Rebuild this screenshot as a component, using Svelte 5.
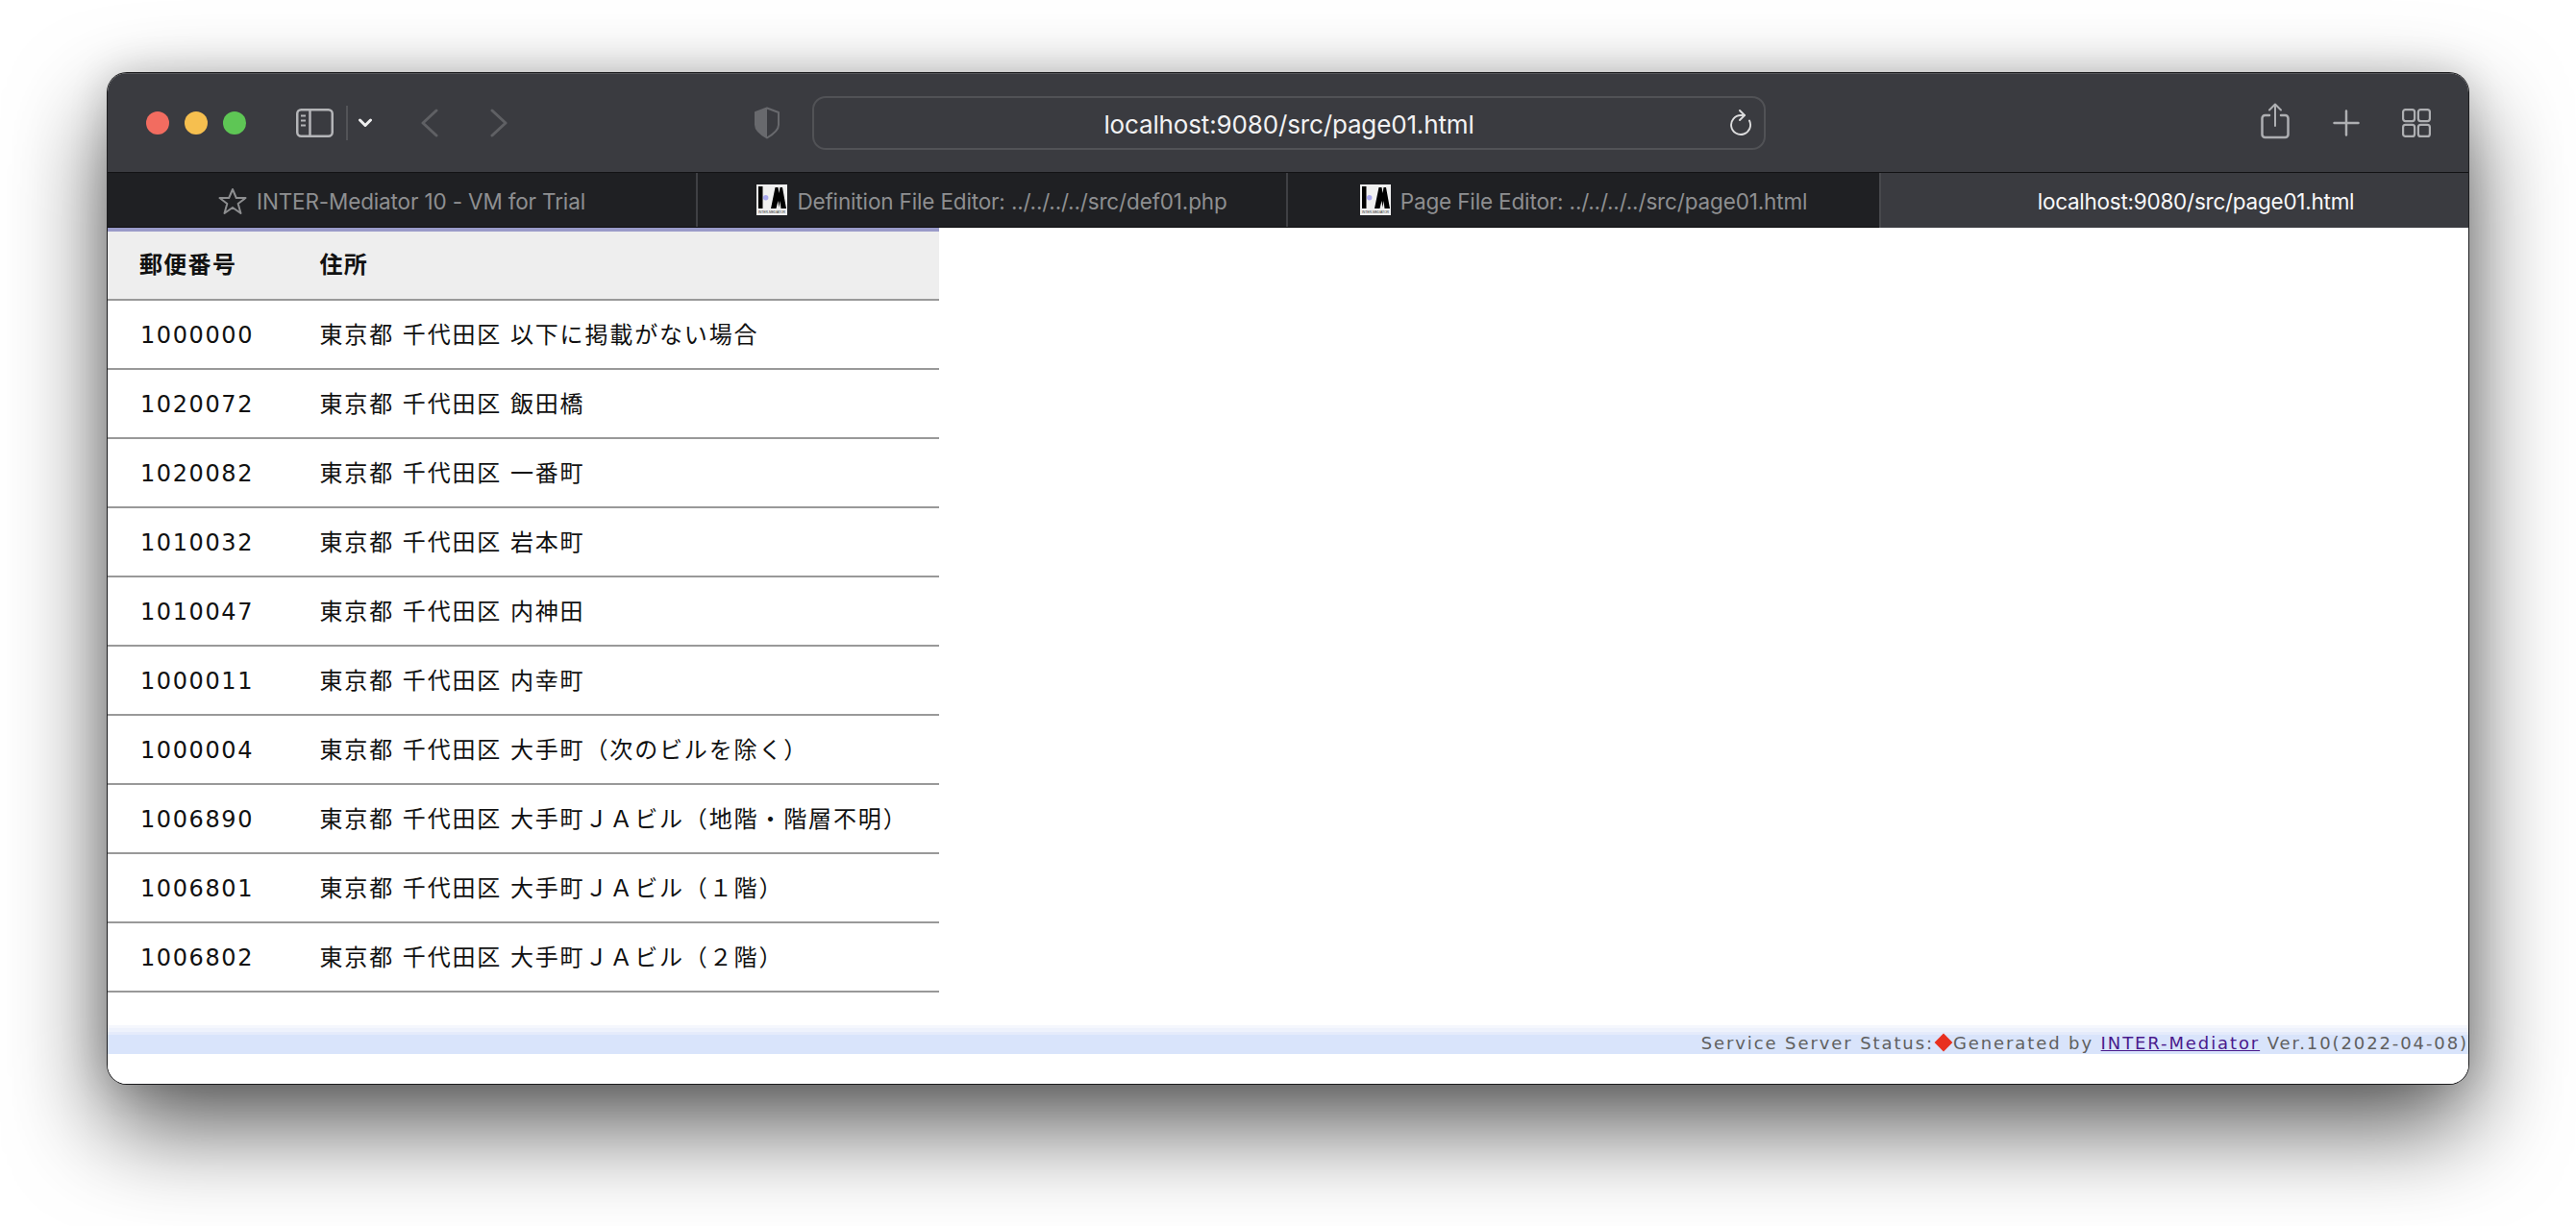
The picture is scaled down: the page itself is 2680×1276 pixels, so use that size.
<script>
  const rows = [
    ['1000000', '東京都 千代田区 以下に掲載がない場合'],
    ['1020072', '東京都 千代田区 飯田橋'],
    ['1020082', '東京都 千代田区 一番町'],
    ['1010032', '東京都 千代田区 岩本町'],
    ['1010047', '東京都 千代田区 内神田'],
    ['1000011', '東京都 千代田区 内幸町'],
    ['1000004', '東京都 千代田区 大手町（次のビルを除く）'],
    ['1006890', '東京都 千代田区 大手町ＪＡビル（地階・階層不明）'],
    ['1006801', '東京都 千代田区 大手町ＪＡビル（１階）'],
    ['1006802', '東京都 千代田区 大手町ＪＡビル（２階）']
  ];
</script>

{#snippet logo()}
  <svg class="logo" viewBox="0 0 32 32" width="32" height="32">
    <rect width="32" height="32" fill="#f0f0f0" />
    <rect x="2" y="2" width="4.500" height="23" fill="#000" />
    <circle cx="9.700" cy="13.700" r="2.700" fill="#a9a9ee" />
    <path d="M15 25 L19.500 3 L22.500 3 L23.500 9 L24.500 3 L27 3 L31 25 L25.500 25 L24.500 17 L23.500 24 L22.500 17 L20.500 25 Z" fill="#000" />
    <text x="16" y="30" font-size="4" text-anchor="middle" textLength="28" lengthAdjust="spacingAndGlyphs" font-family="Liberation Sans, sans-serif" fill="#333">INTER-MEDIATOR</text>
  </svg>
{/snippet}

<div class="page">
  <div class="window">
    <header class="toolbar">
      <div class="lights">
        <span class="light red"></span>
        <span class="light yellow"></span>
        <span class="light green"></span>
      </div>
      <svg class="sidebar" width="39" height="30" viewBox="0 0 39 30" fill="none" stroke="#b4b5b8" stroke-width="2.500">
        <rect x="1.250" y="1.250" width="36.500" height="27.500" rx="4" />
        <path d="M14.500 1.500V28.500" />
        <path d="M5 7.500H10M5 12.500H10M5 17.500H10" stroke-width="2" />
      </svg>
      <span class="divider"></span>
      <svg class="chev" width="16" height="10" viewBox="0 0 16 10" fill="none" stroke="#eeeeef" stroke-width="3" stroke-linecap="round" stroke-linejoin="round">
        <path d="M2.500 2L8 7.500L13.500 2" />
      </svg>
      <svg class="back" width="18" height="30" viewBox="0 0 18 30" fill="none" stroke="#5f6064" stroke-width="3" stroke-linecap="round" stroke-linejoin="round">
        <path d="M16 2L2 15L16 28" />
      </svg>
      <svg class="forward" width="18" height="30" viewBox="0 0 18 30" fill="none" stroke="#5f6064" stroke-width="3" stroke-linecap="round" stroke-linejoin="round">
        <path d="M2 2L16 15L2 28" />
      </svg>
      <svg class="shield" width="28" height="34" viewBox="0 0 28 34">
        <path d="M14 1.500L26 6V19C26 25 20 29 14 32.500C8 29 2 25 2 19V6Z" fill="none" stroke="#68696d" stroke-width="2" stroke-linejoin="round" />
        <path d="M14 1.500L2 6V19C2 25 8 29 14 32.500Z" fill="#68696d" />
      </svg>
      <div class="address">
        <span class="url">localhost:9080/src/page01.html</span>
        <svg class="reload" width="24" height="28" viewBox="0 0 24 28" fill="none" stroke="#dcdcdd" stroke-width="1.900" stroke-linecap="round" stroke-linejoin="round">
          <path d="M16 6H12A10 10 0 1 0 21 11.500" />
          <path d="M11 1L16 6L11 11" />
        </svg>
      </div>
      <div class="actions">
        <svg class="share" width="30" height="38" viewBox="0 0 30 38" fill="none" stroke="#aeafb2" stroke-width="2.500" stroke-linecap="round" stroke-linejoin="round">
          <path d="M9 13H4.500A3 3 0 0 0 1.500 16V33A3 3 0 0 0 4.500 36H25.500A3 3 0 0 0 28.500 33V16A3 3 0 0 0 25.500 13H21" />
          <path d="M15 24V2M9 7.500L15 1.500L21 7.500" stroke-width="2" />
        </svg>
        <svg width="28" height="28" viewBox="0 0 28 28" fill="none" stroke="#aeafb2" stroke-width="2.500" stroke-linecap="round">
          <path d="M14 1.500V26.500M1.500 14H26.500" />
        </svg>
        <svg width="30" height="30" viewBox="0 0 30 30" fill="none" stroke="#aeafb2" stroke-width="2.200">
          <rect x="1.100" y="1.100" width="12" height="12" rx="2.500" />
          <rect x="16.900" y="1.100" width="12" height="12" rx="2.500" />
          <rect x="1.100" y="16.900" width="12" height="12" rx="2.500" />
          <rect x="16.900" y="16.900" width="12" height="12" rx="2.500" />
        </svg>
      </div>
    </header>

    <nav class="tabs">
      <div class="tab">
        <svg class="star" width="30" height="29" viewBox="0 0 30 29" fill="none" stroke="#8d8e90" stroke-width="2" stroke-linejoin="round">
          <path d="M15 2L18.800 11H28.500L20.700 17L23.500 27L15 21L6.500 27L9.300 17L1.500 11H11.200Z" />
        </svg>
        <span>INTER-Mediator 10 - VM for Trial</span>
      </div>
      <div class="tab">{@render logo()}<span>Definition File Editor: ../../../../src/def01.php</span></div>
      <div class="tab">{@render logo()}<span>Page File Editor: ../../../../src/page01.html</span></div>
      <div class="tab active"><span>localhost:9080/src/page01.html</span></div>
    </nav>

    <main class="content">
      <table>
        <thead>
          <tr><th class="zip">郵便番号</th><th>住所</th></tr>
        </thead>
        <tbody>
          {#each rows as [zip, address]}
            <tr><td class="zip">{zip}</td><td class="addr">{address}</td></tr>
          {/each}
        </tbody>
      </table>
      <footer class="status">
        <div class="fade one"></div>
        <div class="fade two"></div>
        <div class="fade three"></div>
        <div class="bar">Service Server Status:<span class="diamond"></span>Generated by <a href="#top">INTER-Mediator</a> Ver.10(2022-04-08)</div>
      </footer>
    </main>
  </div>
</div>

<style>
  :global(body) {
    margin: 0;
    background: #fff;
  }
  .page {
    width: 2680px;
    height: 1276px;
    box-sizing: border-box;
    padding: 76px 112px 0;
    overflow: hidden;
    background: #fff;
  }
  .window {
    height: 1052px;
    border-radius: 20px;
    background: #fff;
    overflow: hidden;
    display: flex;
    flex-direction: column;
    box-shadow: 0 0 0 1px #1c1c1e, 0 44px 100px rgba(0, 0, 0, 0.66), 0 0 40px rgba(0, 0, 0, 0.16);
  }
  .toolbar {
    height: 104px;
    flex: none;
    background: #3a3b40;
    border-top: 1px solid #55565a;
    box-sizing: border-box;
    display: flex;
    align-items: center;
    padding: 0 39px 0 40px;
    border-bottom: 1px solid #121214;
    font-family: Inter, "Liberation Sans", sans-serif;
  }
  .lights {
    display: flex;
    gap: 16px;
    margin-bottom: 1px;
  }
  .light {
    width: 24px;
    height: 24px;
    border-radius: 50%;
  }
  .red { background: #f26c60; }
  .yellow { background: #f6bf4f; }
  .green { background: #5ec655; }
  .sidebar { margin-left: 52px; flex: none; }
  .divider {
    width: 2px;
    height: 36px;
    background: #525357;
    margin-left: 13px;
    flex: none;
  }
  .chev { margin-left: 10px; flex: none; }
  .back { margin-left: 50px; flex: none; }
  .forward { margin-left: 54px; flex: none; }
  .shield { margin-left: 256px; flex: none; }
  .address {
    margin-left: 33px;
    width: 992px;
    height: 56px;
    box-sizing: border-box;
    border: 2px solid #515256;
    border-radius: 14px;
    display: flex;
    align-items: center;
    justify-content: center;
    position: relative;
    flex: none;
  }
  .url {
    color: #f2f2f3;
    font-size: 26px;
    letter-spacing: -0.15px;
    font-weight: 400;
    margin-top: 2px;
  }
  .reload {
    position: absolute;
    right: 12px;
    top: 12px;
  }
  .actions {
    margin-left: auto;
    display: flex;
    align-items: center;
    gap: 44px;
  }
  .share { margin-bottom: 5px; margin-right: 1px; }
  .tabs {
    height: 56px;
    flex: none;
    display: flex;
    background: #1f2023;
    font-family: Inter, "Liberation Sans", sans-serif;
    font-size: 22.500px;
    letter-spacing: -0.15px;
    color: #8e8f91;
    border-bottom: 1px solid #0d0d0e;
    box-sizing: content-box;
  }
  .tab {
    flex: 0 0 614px;
    box-sizing: border-box;
    display: flex;
    align-items: center;
    justify-content: center;
    gap: 10px;
    border-left: 2px solid #3f4044;
    padding-top: 2px;
  }
  .tab:first-child {
    border-left: none;
    flex-basis: 612px;
  }
  .tab:nth-child(3) { flex-basis: 617px; }
  .tab.active {
    flex: 1;
    background: #3a3b40;
    color: #f8f8f9;
    border-left: 2px solid #47484c;
    margin-bottom: -1px;
    padding-left: 44px;
    letter-spacing: -0.25px;
  }
  .star { flex: none; }
  .logo {
    flex: none;
    margin-top: -2px;
    overflow: visible;
  }
  .content {
    flex: 1;
    min-height: 0;
    display: flex;
    flex-direction: column;
    border-top: 4px solid transparent;
    background: #fff;
  }
  table {
    width: 865px;
    margin-top: -4px;
    border-collapse: separate;
    border-spacing: 0;
    border-top: 4px solid #9a9bc9;
    font-size: 24px;
    color: #111;
  }
  th, td {
    padding: 0;
    box-sizing: border-box;
    height: 72px;
    text-align: left;
    border-bottom: 2px solid #999;
    font-family: "Noto Sans CJK JP", sans-serif;
    letter-spacing: 1.850px;
    word-spacing: 1.500px;
  }
  th {
    background: #eee;
    font-weight: 700;
    padding-bottom: 5px;
    letter-spacing: 1.300px;
  }
  .addr { padding-bottom: 4px; }
  .zip {
    width: 220.500px;
    padding-left: 33px;
  }
  td.zip {
    font-family: "DejaVu Sans", sans-serif;
    letter-spacing: 1.600px;
    padding-left: 34px;
    padding-top: 2px;
  }
  .status {
    margin-top: 34px;
    font-family: "DejaVu Sans", "Noto Sans CJK JP", sans-serif;
    font-size: 18px;
  }
  .fade { height: 3px; }
  .one { background: #f5f7fd; }
  .two { background: #eef2fc; height: 4px; }
  .three { background: #e5ebfb; }
  .bar {
    height: 20px;
    background: #d9e4fb;
    color: #606060;
    text-align: right;
    white-space: nowrap;
    line-height: 18px;
    letter-spacing: 1.900px;
  }
  .bar a { color: #4a1a8c; }
  .diamond {
    display: inline-block;
    width: 14px;
    height: 14px;
    background: #e8301f;
    transform: rotate(45deg) scale(0.95, 0.95);
    margin: 0 3px;
  }
</style>
